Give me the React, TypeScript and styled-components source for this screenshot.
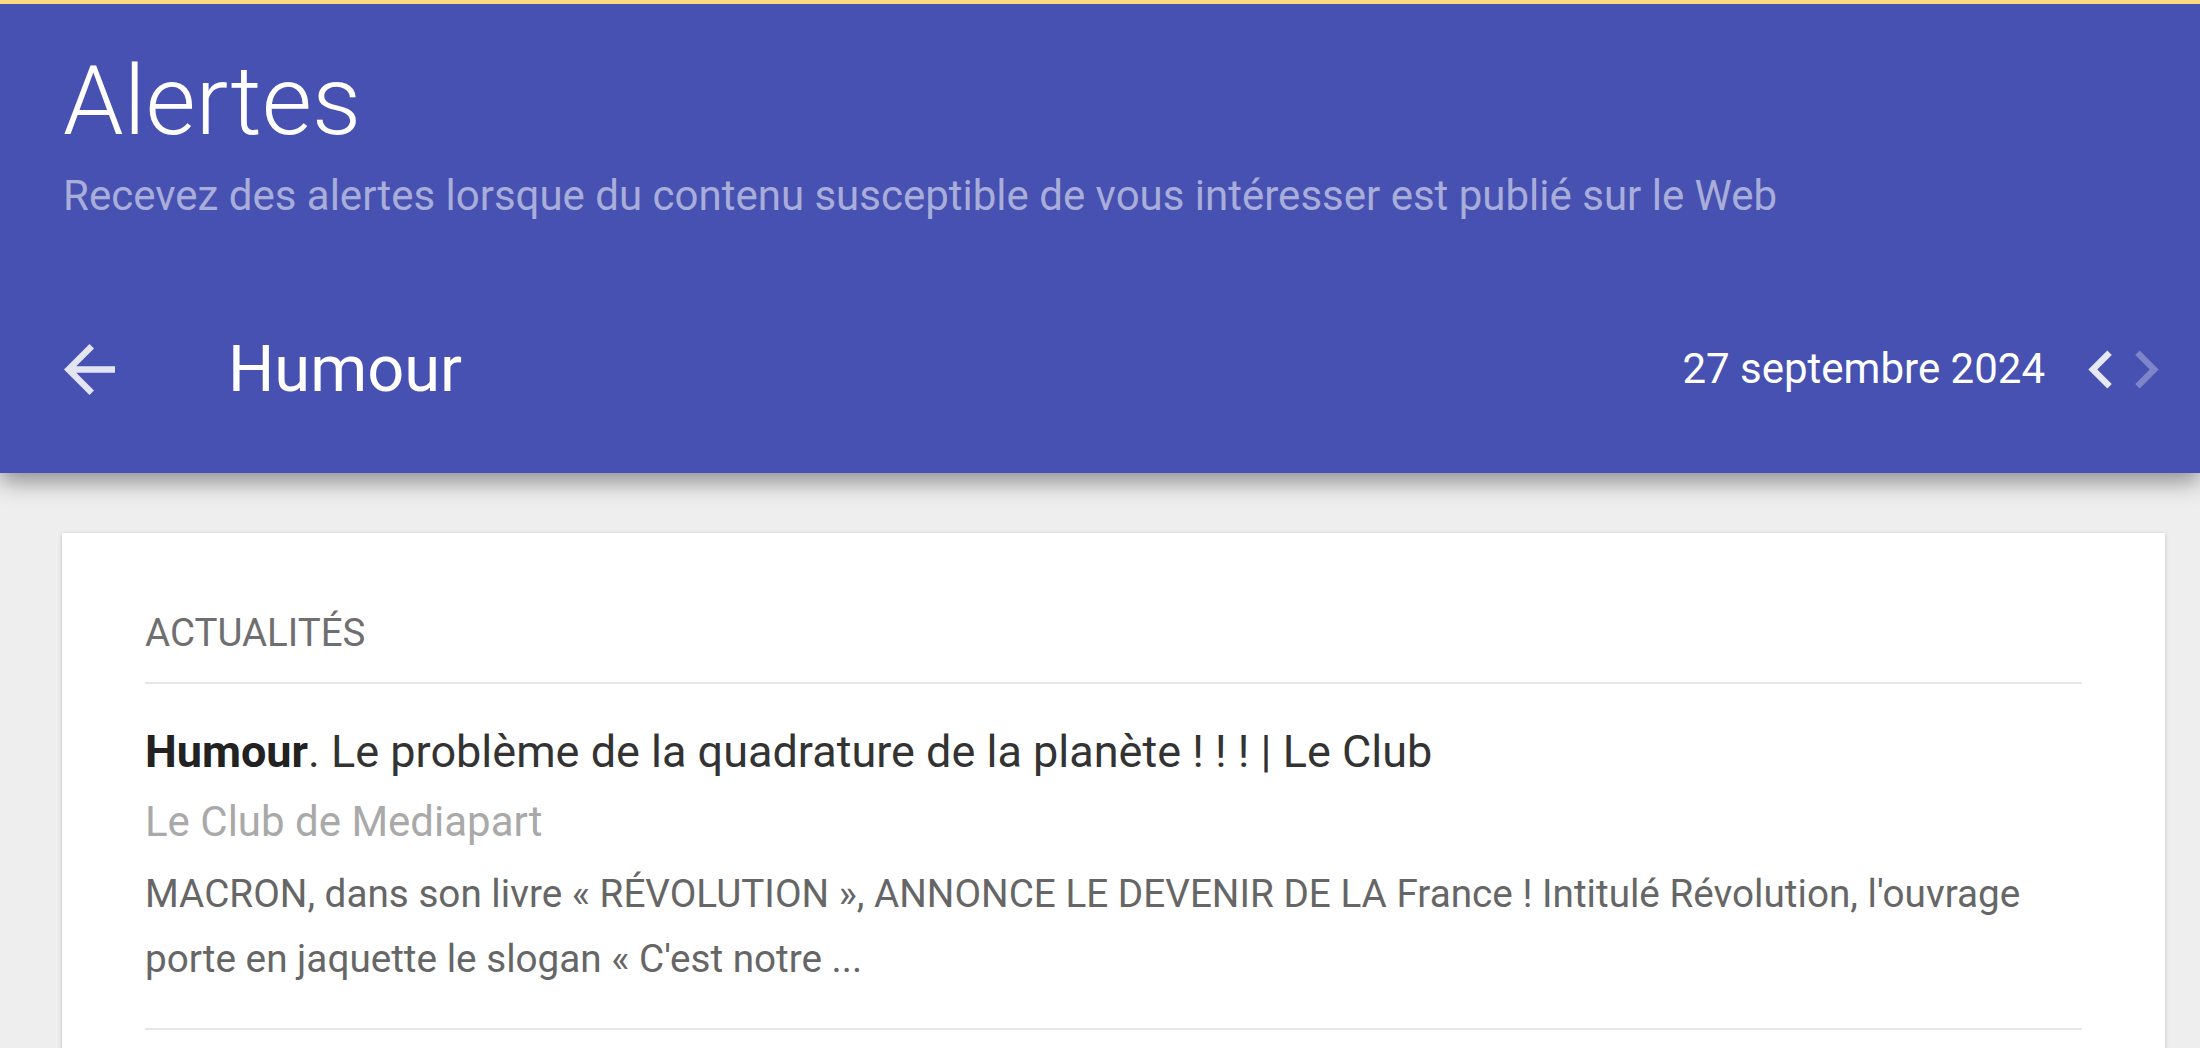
import React from "react";
import styled, { createGlobalStyle } from "styled-components";

const GlobalStyle = createGlobalStyle`
  html, body {
    margin: 0;
    padding: 0;
    background: #eeeeee;
    font-family: Roboto, "Noto Sans", Arial, sans-serif;
    -webkit-font-smoothing: antialiased;
  }
  * { box-sizing: border-box; }
`;

const Page = styled.div`
  min-height: 100vh;
  background: #eeeeee;
  overflow: hidden;
`;

const Header = styled.header`
  position: relative;
  z-index: 2;
  background: #4751b1;
  border-top: 4px solid #fad97f;
  box-shadow: 0 8px 22px rgba(0, 0, 0, 0.42);
  color: #ffffff;
  padding-bottom: 66px;
`;

const Intro = styled.div`
  padding: 41px 0 0 63px;
`;

const PageTitle = styled.h1`
  margin: 0;
  font-size: 97px;
  line-height: 112px;
  font-weight: 300;
  color: #ffffff;
`;

const Subtitle = styled.p`
  margin: 15px 0 0;
  font-size: 42px;
  line-height: 48px;
  font-weight: 400;
  color: rgba(255, 255, 255, 0.54);
`;

const DigestBar = styled.div`
  display: flex;
  align-items: center;
  justify-content: space-between;
  height: 76px;
  margin-top: 111px;
  padding: 0 38px 0 64px;
`;

const DigestLeft = styled.div`
  display: flex;
  align-items: center;
`;

const DigestRight = styled.div`
  display: flex;
  align-items: center;
`;

const BackIcon = styled.svg`
  width: 51px;
  height: 51px;
  fill: rgba(255, 255, 255, 0.85);
  flex: none;
`;

const DigestName = styled.h2`
  margin: 0 0 0 113px;
  font-size: 65px;
  line-height: 76px;
  font-weight: 400;
  color: #ffffff;
`;

const DateLabel = styled.span`
  font-size: 42px;
  line-height: 76px;
  font-weight: 400;
  color: #ffffff;
  margin-right: 40px;
`;

const Chevron = styled.svg<{ $disabled?: boolean }>`
  width: 32px;
  height: 57px;
  flex: none;
  fill: ${(p) => (p.$disabled ? "rgba(255,255,255,0.3)" : "rgba(255,255,255,0.87)")};
  & + & {
    margin-left: 13px;
  }
`;

const Content = styled.main`
  padding: 60px 35px 0 62px;
`;

const Card = styled.section`
  background: #ffffff;
  box-shadow: 0 1px 4px rgba(0, 0, 0, 0.2);
  padding: 79px 83px;
`;

const SectionLabel = styled.div`
  font-size: 38.5px;
  line-height: 42px;
  font-weight: 400;
  color: #6f6f6f;
  text-transform: uppercase;
  padding-bottom: 28px;
  border-bottom: 2px solid #e6e6e6;
`;

const Article = styled.article`
  padding: 40px 0 37px;
  border-bottom: 2px solid #e6e6e6;
`;

const ArticleTitle = styled.a`
  display: block;
  font-size: 45px;
  line-height: 56px;
  color: #333333;
  text-decoration: none;
  b {
    font-weight: 700;
    color: #222222;
  }
`;

const Source = styled.div`
  margin-top: 17px;
  font-size: 42px;
  line-height: 50px;
  color: #a9a9a9;
`;

const Snippet = styled.p`
  margin: 14px 0 0;
  font-size: 38.7px;
  line-height: 65px;
  color: #666666;
`;

export default function App() {
  return (
    <Page>
      <GlobalStyle />
      <Header>
        <Intro>
          <PageTitle>Alertes</PageTitle>
          <Subtitle>
            Recevez des alertes lorsque du contenu susceptible de vous intéresser est publié sur le Web
          </Subtitle>
        </Intro>
        <DigestBar>
          <DigestLeft>
            <BackIcon viewBox="4 4 16 16" aria-label="Retour">
              <path d="M20 11H7.83l5.59-5.59L12 4l-8 8 8 8 1.41-1.41L7.83 13H20v-2z" />
            </BackIcon>
            <DigestName>Humour</DigestName>
          </DigestLeft>
          <DigestRight>
            <DateLabel>27 septembre 2024</DateLabel>
            <Chevron viewBox="7 3 10 18" aria-label="Précédent">
              <path d="M15.41 7.41L14 6l-6 6 6 6 1.41-1.41L10.83 12z" />
            </Chevron>
            <Chevron viewBox="7 3 10 18" $disabled aria-label="Suivant">
              <path d="M10 6L8.59 7.41 13.17 12l-4.58 4.59L10 18l6-6z" />
            </Chevron>
          </DigestRight>
        </DigestBar>
      </Header>
      <Content>
        <Card>
          <SectionLabel>Actualités</SectionLabel>
          <Article>
            <ArticleTitle href="#">
              <b>Humour</b>. Le problème de la quadrature de la planète ! ! ! | Le Club
            </ArticleTitle>
            <Source>Le Club de Mediapart</Source>
            <Snippet>
              MACRON, dans son livre « RÉVOLUTION », ANNONCE LE DEVENIR DE LA France ! Intitulé Révolution, l'ouvrage porte en jaquette le slogan « C'est notre ...
            </Snippet>
          </Article>
        </Card>
      </Content>
    </Page>
  );
}
